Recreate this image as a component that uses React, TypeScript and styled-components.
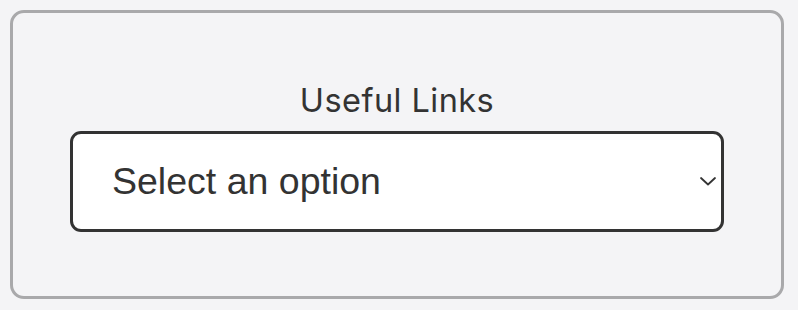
import React from 'react';
import styled, { createGlobalStyle } from 'styled-components';

const GlobalStyle = createGlobalStyle`
  html, body {
    margin: 0;
    padding: 0;
    background: #f4f4f6;
  }
  body {
    font-family: Inter, "Liberation Sans", sans-serif;
    color: #333;
  }
`;

const Page = styled.div`
  padding: 10px 14px 11px 10px;
`;

const Card = styled.div`
  height: 289px;
  box-sizing: border-box;
  border: 3px solid #a9a9ab;
  border-radius: 14px;
  background: #f4f4f6;
  display: flex;
  flex-direction: column;
  align-items: center;
  justify-content: center;
  gap: 11px;
  padding-top: 3px;
`;

const Label = styled.label`
  font-family: Inter, "Liberation Sans", sans-serif;
  font-size: 32.5px;
  line-height: 39px;
  color: #333;
  letter-spacing: 0.45px;
`;

const SelectWrap = styled.div`
  position: relative;
  width: 654px;
`;

const Select = styled.select`
  appearance: none;
  -webkit-appearance: none;
  display: block;
  width: 100%;
  height: 101px;
  box-sizing: border-box;
  border: 3px solid #333;
  border-radius: 11px;
  background: #fff;
  padding: 0 40px 0 39px;
  font-family: "Liberation Sans", Arial, sans-serif;
  font-size: 37.5px;
  color: #333;
  outline: none;
`;

const Chevron = styled.svg`
  position: absolute;
  right: 7px;
  top: 50%;
  width: 18px;
  height: 10px;
  margin-top: -5px;
  pointer-events: none;
`;

export default function App() {
  return (
    <>
      <GlobalStyle />
      <Page>
        <Card>
          <Label htmlFor="links">Useful Links</Label>
          <SelectWrap>
            <Select id="links" defaultValue="">
              <option value="">Select an option</option>
              <option value="docs">Documentation</option>
              <option value="support">Support</option>
            </Select>
            <Chevron viewBox="0 0 18 10" fill="none">
              <path d="M2 2 L9 8.5 L16 2" stroke="#333" strokeWidth="1.8" strokeLinecap="round" strokeLinejoin="round" />
            </Chevron>
          </SelectWrap>
        </Card>
      </Page>
    </>
  );
}
